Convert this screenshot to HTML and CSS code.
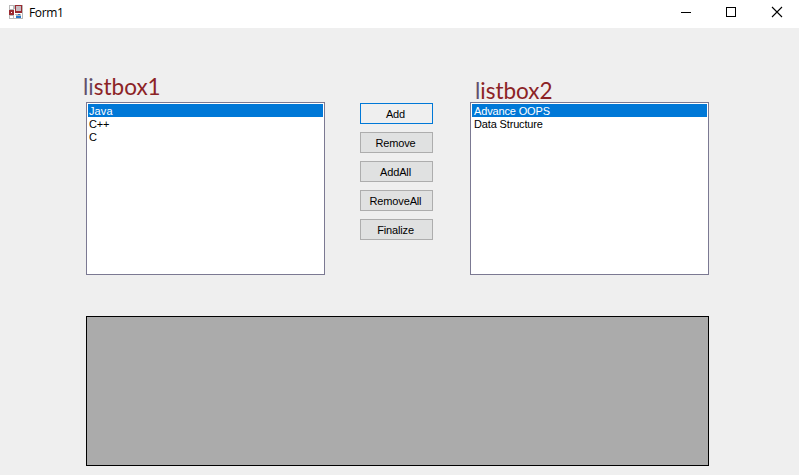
FILE: index.html
```html
<!DOCTYPE html>
<html lang="en">
<head>
<meta charset="utf-8">
<title>Form1</title>
<link rel="stylesheet" href="styles.css">
</head>
<body>
<header class="titlebar">
  <svg class="app-icon" width="14" height="14" viewBox="0 0 14 14" shape-rendering="crispEdges">
    <path fill="#b9b9b9" d="M0 0h14v14H0z"/>
    <path fill="#fff" d="M1 1h3v3H1zM1 11h3v2H1zM5 10h2v3H5zM12 9h1v4h-1z"/>
    <path fill="#9a2a30" d="M6 0h7v8H6zM0 5h5v5H0z"/>
    <path fill="#c6bcc2" d="M7 1h5v5H7z"/>
    <path fill="#fff" d="M2 7h1v1H2zM5 4h1v6H5zM6 8h7v1H6z"/>
    <path fill="#2678c8" d="M9 9h2v1H9zM7 11h5v2H7z"/>
  </svg>
  <span class="title">Form1</span>
  <div class="controls">
    <svg width="46" height="28" viewBox="0 0 46 28" shape-rendering="crispEdges"><path d="M19 12.5h10" stroke="#000"/></svg>
    <svg width="46" height="28" viewBox="0 0 46 28" shape-rendering="crispEdges"><path d="M19.5 7.5h9v9h-9z" fill="none" stroke="#000"/></svg>
    <svg width="46" height="28" viewBox="0 0 46 28"><path d="M19 7l10 10M29 7L19 17" stroke="#000" stroke-width="1.1"/></svg>
  </div>
</header>
<main class="form">
  <div class="top">
    <section class="group">
      <h2 class="label"><span class="tint">li</span>stbox1</h2>
      <ul class="listbox">
        <li class="selected java">Java</li>
        <li>C++</li>
        <li>C</li>
      </ul>
    </section>
    <div class="buttons">
      <button class="default">Add</button>
      <button>Remove</button>
      <button>AddAll</button>
      <button>RemoveAll</button>
      <button>Finalize</button>
    </div>
    <section class="group second">
      <h2 class="label"><span class="tint">l</span>istbox2</h2>
      <ul class="listbox">
        <li class="selected">Advance OOPS</li>
        <li>Data Structure</li>
      </ul>
    </section>
  </div>
  <div class="datagrid"></div>
</main>
</body>
</html>
```
FILE: styles.css
```css
* { box-sizing: border-box; }
body {
  margin: 0;
  height: 475px;
  overflow: hidden;
  background: #efefef;
  font: 11px/13px "Liberation Sans", sans-serif;
  color: #000;
}
.titlebar {
  display: flex;
  height: 28px;
  padding-left: 9px;
  background: #fff;
}
.app-icon { margin-top: 5px; }
.title {
  margin: 4px 0 0 6px;
  font: 12px/18px "Open Sans", sans-serif;
  letter-spacing: -0.35px;
}
.controls { display: flex; margin-left: auto; }
.controls svg { display: block; }
.controls svg:first-child { margin-right: -1px; }
.form { padding: 43px 90px 0 86px; }
.top { display: flex; height: 204px; }
.group { width: 239px; }
.label {
  height: 31px;
  margin: 0 0 0 -3px;
  font: 400 22.5px/31px Lato, sans-serif;
  color: #8c2326;
}
.second .label { margin-left: 5px; padding-top: 4px; }
.tint { color: #62506c; }
.listbox {
  height: 173px;
  margin: 0;
  padding: 1px;
  border: 1px solid #7b7992;
  background: #fff;
  list-style: none;
}
.listbox li { height: 13px; padding-left: 1px; line-height: 15px; letter-spacing: -0.15px; }
.second .listbox li { padding-left: 2px; }
.listbox .selected { background: #0078d7; color: #fff; }
.listbox .java { letter-spacing: 0.1px; }
.buttons {
  display: flex;
  flex-direction: column;
  gap: 8px;
  width: 73px;
  margin: 32px 37px 0 35px;
}
.buttons button {
  height: 21px;
  padding: 1px 2px 0 0;
  border: 1px solid #adadad;
  background: #e0e1e1;
  color: #000;
  font: inherit;
  letter-spacing: -0.15px;
}
.buttons .default { border-color: #0078d7; background: #efefef; }
.datagrid {
  height: 150px;
  margin-top: 41px;
  border: 1px solid #000;
  background: #ababab;
}
```
